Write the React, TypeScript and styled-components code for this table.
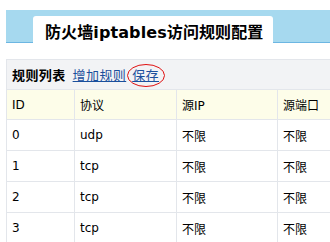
import React from 'react';
import styled, {createGlobalStyle} from 'styled-components';

const GlobalStyle = createGlobalStyle`
    body {
        margin: 0;
        background: #fff;
        overflow: hidden;
        font-family: "DejaVu Sans", "Noto Sans CJK SC", sans-serif;
        font-size: 12px;
        color: #000;
    }
`

const Page = styled.div`
    padding: 10px 0 0 6px;
    width: 500px;
`

const Band = styled.div`
    height: 32px;
    background-color: #a6d9ef;
    border-bottom: 1px solid #6cb6e2;
    display: flex;
    align-items: flex-end;
    padding-left: 27px;
`

const Tab = styled.div`
    width: 240px;
    height: 27px;
    margin-bottom: -1px;
    background: #fff;
    border-radius: 3px 3px 0 0;
    display: flex;
    align-items: center;
    padding: 2px 0 0 12px;
    box-sizing: border-box;
    font-size: 16px;
    font-weight: bold;
    letter-spacing: 0.1px;
`

const Toolbar = styled.div`
    margin-top: 16px;
    height: 30px;
    background: #f2f3f5;
    border-top: 1px solid #e3e6eb;
    border-left: 1px solid #e3e6eb;
    display: flex;
    align-items: center;
    padding: 1px 0 0 5px;
    box-sizing: border-box;
    font-family: "Noto Sans CJK SC", sans-serif;
    font-size: 13px;
    line-height: 20px;
    letter-spacing: 0.4px;
`

const ToolTitle = styled.span`
    font-weight: bold;
    margin-right: 7px;
`

const Link = styled.a`
    color: #1a4f9c;
    text-decoration: underline;
    cursor: pointer;
`

const Marked = styled.span`
    position: relative;
    display: inline-block;
    margin-left: 6px;
`

const Ellipse = styled.svg`
    position: absolute;
    left: -5px;
    top: -1px;
    overflow: visible;
`

const Table = styled.table`
    border-collapse: collapse;
    table-layout: fixed;
    width: 372px;
`

const Th = styled.th<{w: number}>`
    width: ${p => p.w}px;
    height: 30px;
    background: #fdfde9;
    border: 1px solid #e3e6eb;
    text-align: left;
    font-weight: normal;
    padding: 0 0 0 5px;
    box-sizing: border-box;
`

const Td = styled.td`
    height: 30px;
    border: 1px solid #e3e6eb;
    padding: 0 0 0 5px;
`

const columns = [
    {title: 'ID', w: 68},
    {title: '协议', w: 102},
    {title: '源IP', w: 101},
    {title: '源端口', w: 101},
]

const rules = [
    ['0', 'udp'],
    ['1', 'tcp'],
    ['2', 'tcp'],
    ['3', 'tcp'],
]

export default function App() {
    return (
        <>
            <GlobalStyle />
            <Page>
                <Band>
                    <Tab>防火墙iptables访问规则配置</Tab>
                </Band>
                <Toolbar>
                    <ToolTitle>规则列表</ToolTitle>
                    <Link>增加规则</Link>
                    <Marked>
                        <Link>保存</Link>
                        <Ellipse width="38" height="23" viewBox="0 0 38 23">
                            <ellipse cx="19" cy="11.5" rx="18.5" ry="11" fill="none" stroke="#e01010" strokeWidth="1" />
                        </Ellipse>
                    </Marked>
                </Toolbar>
                <Table>
                    <thead>
                        <tr>
                            {columns.map(c => <Th key={c.title} w={c.w}>{c.title}</Th>)}
                        </tr>
                    </thead>
                    <tbody>
                        {rules.map(r => (
                            <tr key={r[0]}>
                                <Td>{r[0]}</Td>
                                <Td>{r[1]}</Td>
                                <Td>不限</Td>
                                <Td>不限</Td>
                            </tr>
                        ))}
                    </tbody>
                </Table>
            </Page>
        </>
    )
}
